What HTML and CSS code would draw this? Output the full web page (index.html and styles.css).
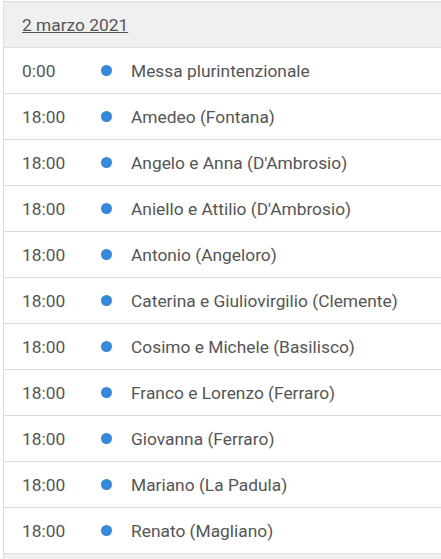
FILE: index.html
```html
<!DOCTYPE html>
<html lang="it">
<head>
<meta charset="utf-8">
<title>Calendario</title>
<link rel="stylesheet" href="styles.css">
</head>
<body>
<div class="list">
  <div class="day-header"><a class="day-link" href="#">2 marzo 2021</a></div>
  <div class="event"><span class="time">0:00</span><span class="dot"></span><span class="title">Messa plurintenzionale</span></div>
  <div class="event"><span class="time">18:00</span><span class="dot"></span><span class="title">Amedeo (Fontana)</span></div>
  <div class="event"><span class="time">18:00</span><span class="dot"></span><span class="title">Angelo e Anna (D'Ambrosio)</span></div>
  <div class="event"><span class="time">18:00</span><span class="dot"></span><span class="title">Aniello e Attilio (D'Ambrosio)</span></div>
  <div class="event"><span class="time">18:00</span><span class="dot"></span><span class="title">Antonio (Angeloro)</span></div>
  <div class="event"><span class="time">18:00</span><span class="dot"></span><span class="title">Caterina e Giuliovirgilio (Clemente)</span></div>
  <div class="event"><span class="time">18:00</span><span class="dot"></span><span class="title">Cosimo e Michele (Basilisco)</span></div>
  <div class="event"><span class="time">18:00</span><span class="dot"></span><span class="title">Franco e Lorenzo (Ferraro)</span></div>
  <div class="event"><span class="time">18:00</span><span class="dot"></span><span class="title">Giovanna (Ferraro)</span></div>
  <div class="event"><span class="time">18:00</span><span class="dot"></span><span class="title">Mariano (La Padula)</span></div>
  <div class="event"><span class="time">18:00</span><span class="dot"></span><span class="title">Renato (Magliano)</span></div>
  <div class="day-header"></div>
</div>
</body>
</html>
```
FILE: styles.css
```css
html, body {
  margin: 0;
  padding: 0;
  background: #fff;
}
body {
  padding: 1px 0 0 3px;
  font-family: Roboto, "Liberation Sans", sans-serif;
  font-size: 17.35px;
  color: #555;
}
.list {
  border-left: 1px solid #ddd;
  border-top: 1px solid #ddd;
}
.day-header {
  height: 45px;
  background: #f0f0f0;
  border-bottom: 1px solid #ddd;
  display: flex;
  align-items: center;
  padding-left: 18px;
}
.day-link {
  color: #555;
  text-decoration: underline;
  line-height: 24px;
}
.event {
  height: 45px;
  border-bottom: 1px solid #ddd;
  display: flex;
  align-items: center;
  padding-left: 18px;
  line-height: 24px;
}
.time {
  width: 79px;
}
.dot {
  width: 11px;
  height: 11px;
  border-radius: 50%;
  background: #3788d8;
  margin-right: 19px;
}
.title {
  white-space: nowrap;
}
```
